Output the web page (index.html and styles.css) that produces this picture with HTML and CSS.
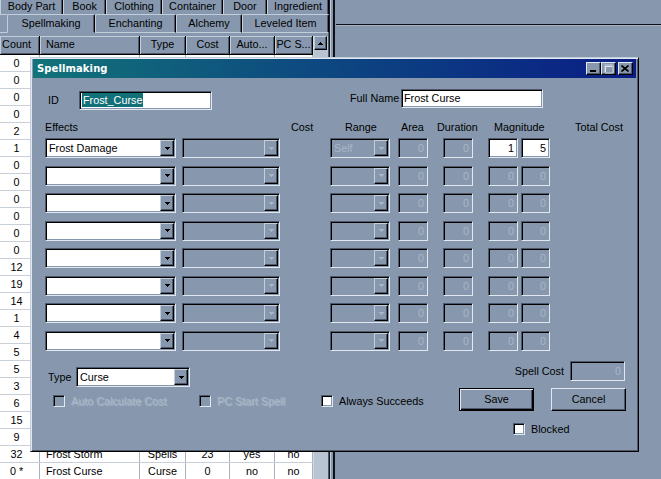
FILE: index.html
```html
<!DOCTYPE html>
<html>
<head>
<meta charset="utf-8">
<title>Spellmaking</title>
<link rel="stylesheet" href="styles.css">
</head>
<body>
<div class="screen">
  <div class="leftpane">
    <div class="tabs1">
      <div class="tab1 tw-body">Body Part</div>
      <div class="tab1 tw-book">Book</div>
      <div class="tab1 tw-cloth">Clothing</div>
      <div class="tab1 tw-cont">Container</div>
      <div class="tab1 tw-door">Door</div>
      <div class="tab1 tw-ingr">Ingredient</div>
    </div>
    <div class="tabs2">
      <div class="tab2 stub"></div>
      <div class="tab2 active tw-spell">Spellmaking</div>
      <div class="tab2 tw-ench">Enchanting</div>
      <div class="tab2 tw-alch">Alchemy</div>
      <div class="tab2 tw-lev">Leveled Item</div>
    </div>
    <div class="panel">
      <div class="list">
        <div class="lrow lhead">
          <div class="hc c-count">Count</div>
          <div class="hc c-name">Name</div>
          <div class="hc c-type">Type</div>
          <div class="hc c-cost">Cost</div>
          <div class="hc c-auto">Auto...</div>
          <div class="hc c-pc">PC S...</div>
        </div>
        <div class="lrow"><div class="dc c-count">0</div><div class="dc c-name"></div><div class="dc c-type"></div><div class="dc c-cost"></div><div class="dc c-auto"></div><div class="dc c-pc"></div></div>
        <div class="lrow"><div class="dc c-count">0</div><div class="dc c-name"></div><div class="dc c-type"></div><div class="dc c-cost"></div><div class="dc c-auto"></div><div class="dc c-pc"></div></div>
        <div class="lrow"><div class="dc c-count">0</div><div class="dc c-name"></div><div class="dc c-type"></div><div class="dc c-cost"></div><div class="dc c-auto"></div><div class="dc c-pc"></div></div>
        <div class="lrow"><div class="dc c-count">0</div><div class="dc c-name"></div><div class="dc c-type"></div><div class="dc c-cost"></div><div class="dc c-auto"></div><div class="dc c-pc"></div></div>
        <div class="lrow"><div class="dc c-count">2</div><div class="dc c-name"></div><div class="dc c-type"></div><div class="dc c-cost"></div><div class="dc c-auto"></div><div class="dc c-pc"></div></div>
        <div class="lrow"><div class="dc c-count">1</div><div class="dc c-name"></div><div class="dc c-type"></div><div class="dc c-cost"></div><div class="dc c-auto"></div><div class="dc c-pc"></div></div>
        <div class="lrow"><div class="dc c-count">0</div><div class="dc c-name"></div><div class="dc c-type"></div><div class="dc c-cost"></div><div class="dc c-auto"></div><div class="dc c-pc"></div></div>
        <div class="lrow"><div class="dc c-count">0</div><div class="dc c-name"></div><div class="dc c-type"></div><div class="dc c-cost"></div><div class="dc c-auto"></div><div class="dc c-pc"></div></div>
        <div class="lrow"><div class="dc c-count">0</div><div class="dc c-name"></div><div class="dc c-type"></div><div class="dc c-cost"></div><div class="dc c-auto"></div><div class="dc c-pc"></div></div>
        <div class="lrow"><div class="dc c-count">0</div><div class="dc c-name"></div><div class="dc c-type"></div><div class="dc c-cost"></div><div class="dc c-auto"></div><div class="dc c-pc"></div></div>
        <div class="lrow"><div class="dc c-count">0</div><div class="dc c-name"></div><div class="dc c-type"></div><div class="dc c-cost"></div><div class="dc c-auto"></div><div class="dc c-pc"></div></div>
        <div class="lrow"><div class="dc c-count">0</div><div class="dc c-name"></div><div class="dc c-type"></div><div class="dc c-cost"></div><div class="dc c-auto"></div><div class="dc c-pc"></div></div>
        <div class="lrow"><div class="dc c-count">12</div><div class="dc c-name"></div><div class="dc c-type"></div><div class="dc c-cost"></div><div class="dc c-auto"></div><div class="dc c-pc"></div></div>
        <div class="lrow"><div class="dc c-count">19</div><div class="dc c-name"></div><div class="dc c-type"></div><div class="dc c-cost"></div><div class="dc c-auto"></div><div class="dc c-pc"></div></div>
        <div class="lrow"><div class="dc c-count">14</div><div class="dc c-name"></div><div class="dc c-type"></div><div class="dc c-cost"></div><div class="dc c-auto"></div><div class="dc c-pc"></div></div>
        <div class="lrow"><div class="dc c-count">1</div><div class="dc c-name"></div><div class="dc c-type"></div><div class="dc c-cost"></div><div class="dc c-auto"></div><div class="dc c-pc"></div></div>
        <div class="lrow"><div class="dc c-count">4</div><div class="dc c-name"></div><div class="dc c-type"></div><div class="dc c-cost"></div><div class="dc c-auto"></div><div class="dc c-pc"></div></div>
        <div class="lrow"><div class="dc c-count">5</div><div class="dc c-name"></div><div class="dc c-type"></div><div class="dc c-cost"></div><div class="dc c-auto"></div><div class="dc c-pc"></div></div>
        <div class="lrow"><div class="dc c-count">5</div><div class="dc c-name"></div><div class="dc c-type"></div><div class="dc c-cost"></div><div class="dc c-auto"></div><div class="dc c-pc"></div></div>
        <div class="lrow"><div class="dc c-count">3</div><div class="dc c-name"></div><div class="dc c-type"></div><div class="dc c-cost"></div><div class="dc c-auto"></div><div class="dc c-pc"></div></div>
        <div class="lrow"><div class="dc c-count">6</div><div class="dc c-name"></div><div class="dc c-type"></div><div class="dc c-cost"></div><div class="dc c-auto"></div><div class="dc c-pc"></div></div>
        <div class="lrow"><div class="dc c-count">15</div><div class="dc c-name"></div><div class="dc c-type"></div><div class="dc c-cost"></div><div class="dc c-auto"></div><div class="dc c-pc"></div></div>
        <div class="lrow"><div class="dc c-count">9</div><div class="dc c-name"></div><div class="dc c-type"></div><div class="dc c-cost"></div><div class="dc c-auto"></div><div class="dc c-pc"></div></div>
        <div class="lrow"><div class="dc c-count">32</div><div class="dc c-name">Frost Storm</div><div class="dc c-type">Spells</div><div class="dc c-cost">23</div><div class="dc c-auto">yes</div><div class="dc c-pc">no</div></div>
        <div class="lrow"><div class="dc c-count">0 *</div><div class="dc c-name">Frost Curse</div><div class="dc c-type">Curse</div><div class="dc c-cost">0</div><div class="dc c-auto">no</div><div class="dc c-pc">no</div></div>
      </div>
      <div class="vscroll">
        <div class="sbtn"><svg width="5" height="3" viewBox="0 0 5 3"><path d="M2 0h1v1H2zM1 1h3v1H1zM0 2h5v1H0z"/></svg></div>
      </div>
    </div>
  </div>
  <div class="sep"></div>
  <div class="rightpane"><div class="rtop"></div></div>
</div>

<div class="dlg">
  <div class="titlebar">
    <span class="title">Spellmaking</span>
    <div class="tbtns">
      <span class="tbtn"><svg width="7" height="2" viewBox="0 0 7 2"><rect x="0" y="0" width="6" height="2" fill="#000"/></svg></span>
      <span class="tbtn tb-max"><svg width="10" height="10" viewBox="0 0 10 10"><path d="M1 1h8v8H1z M1.5 2.5h7v6h-7z" fill="none" stroke="#e0e7ef" stroke-width="1"/><path d="M0.5 0.5h8v8h-8z M0.5 1.5h8" fill="none" stroke="#a8b5c6" stroke-width="1"/></svg></span>
      <span class="tbtn tb-close"><svg width="8" height="7" viewBox="0 0 8 7"><path d="M0.5 0.5L7.5 6.5M7.5 0.5L0.5 6.5" stroke="#000" stroke-width="1.7"/></svg></span>
    </div>
  </div>
  <div class="dbody">
    <div class="toprow">
      <span class="lbl lbl-id">ID</span>
      <div class="edit white in-id"><span class="selected">Frost_Curse</span></div>
      <span class="lbl lbl-fn">Full Name</span>
      <div class="edit white in-fn">Frost Curse</div>
    </div>
    <div class="heads">
      <span class="h-eff">Effects</span>
      <span class="h-cost">Cost</span>
      <span class="h-range">Range</span>
      <span class="h-area">Area</span>
      <span class="h-dur">Duration</span>
      <span class="h-mag">Magnitude</span>
      <span class="h-total">Total Cost</span>
    </div>
    <div class="effects">
      <div class="erow">
        <div class="combo white cb-eff"><span class="ctext">Frost Damage</span><span class="cbtn"><svg width="5" height="3" viewBox="0 0 5 3"><path d="M0 0h5v1H0zM1 1h3v1H1zM2 2h1v1H2z"/></svg></span></div>
        <div class="combo dis cb-skill"><span class="ctext"></span><span class="cbtn"><svg width="5" height="3" viewBox="0 0 5 3"><path d="M0 0h5v1H0zM1 1h3v1H1zM2 2h1v1H2z"/></svg></span></div>
        <div class="combo dis cb-range"><span class="ctext">Self</span><span class="cbtn"><svg width="5" height="3" viewBox="0 0 5 3"><path d="M0 0h5v1H0zM1 1h3v1H1zM2 2h1v1H2z"/></svg></span></div>
        <div class="edit dis num e-area">0</div>
        <div class="edit dis num e-dur">0</div>
        <div class="edit white num e-m1">1</div>
        <div class="edit white num e-m2">5</div>
      </div>
      <div class="erow">
        <div class="combo white cb-eff"><span class="ctext"></span><span class="cbtn"><svg width="5" height="3" viewBox="0 0 5 3"><path d="M0 0h5v1H0zM1 1h3v1H1zM2 2h1v1H2z"/></svg></span></div>
        <div class="combo dis cb-skill"><span class="ctext"></span><span class="cbtn"><svg width="5" height="3" viewBox="0 0 5 3"><path d="M0 0h5v1H0zM1 1h3v1H1zM2 2h1v1H2z"/></svg></span></div>
        <div class="combo dis cb-range"><span class="ctext"></span><span class="cbtn"><svg width="5" height="3" viewBox="0 0 5 3"><path d="M0 0h5v1H0zM1 1h3v1H1zM2 2h1v1H2z"/></svg></span></div>
        <div class="edit dis num e-area">0</div>
        <div class="edit dis num e-dur">0</div>
        <div class="edit dis num e-m1">0</div>
        <div class="edit dis num e-m2">0</div>
      </div>
      <div class="erow">
        <div class="combo white cb-eff"><span class="ctext"></span><span class="cbtn"><svg width="5" height="3" viewBox="0 0 5 3"><path d="M0 0h5v1H0zM1 1h3v1H1zM2 2h1v1H2z"/></svg></span></div>
        <div class="combo dis cb-skill"><span class="ctext"></span><span class="cbtn"><svg width="5" height="3" viewBox="0 0 5 3"><path d="M0 0h5v1H0zM1 1h3v1H1zM2 2h1v1H2z"/></svg></span></div>
        <div class="combo dis cb-range"><span class="ctext"></span><span class="cbtn"><svg width="5" height="3" viewBox="0 0 5 3"><path d="M0 0h5v1H0zM1 1h3v1H1zM2 2h1v1H2z"/></svg></span></div>
        <div class="edit dis num e-area">0</div>
        <div class="edit dis num e-dur">0</div>
        <div class="edit dis num e-m1">0</div>
        <div class="edit dis num e-m2">0</div>
      </div>
      <div class="erow">
        <div class="combo white cb-eff"><span class="ctext"></span><span class="cbtn"><svg width="5" height="3" viewBox="0 0 5 3"><path d="M0 0h5v1H0zM1 1h3v1H1zM2 2h1v1H2z"/></svg></span></div>
        <div class="combo dis cb-skill"><span class="ctext"></span><span class="cbtn"><svg width="5" height="3" viewBox="0 0 5 3"><path d="M0 0h5v1H0zM1 1h3v1H1zM2 2h1v1H2z"/></svg></span></div>
        <div class="combo dis cb-range"><span class="ctext"></span><span class="cbtn"><svg width="5" height="3" viewBox="0 0 5 3"><path d="M0 0h5v1H0zM1 1h3v1H1zM2 2h1v1H2z"/></svg></span></div>
        <div class="edit dis num e-area">0</div>
        <div class="edit dis num e-dur">0</div>
        <div class="edit dis num e-m1">0</div>
        <div class="edit dis num e-m2">0</div>
      </div>
      <div class="erow">
        <div class="combo white cb-eff"><span class="ctext"></span><span class="cbtn"><svg width="5" height="3" viewBox="0 0 5 3"><path d="M0 0h5v1H0zM1 1h3v1H1zM2 2h1v1H2z"/></svg></span></div>
        <div class="combo dis cb-skill"><span class="ctext"></span><span class="cbtn"><svg width="5" height="3" viewBox="0 0 5 3"><path d="M0 0h5v1H0zM1 1h3v1H1zM2 2h1v1H2z"/></svg></span></div>
        <div class="combo dis cb-range"><span class="ctext"></span><span class="cbtn"><svg width="5" height="3" viewBox="0 0 5 3"><path d="M0 0h5v1H0zM1 1h3v1H1zM2 2h1v1H2z"/></svg></span></div>
        <div class="edit dis num e-area">0</div>
        <div class="edit dis num e-dur">0</div>
        <div class="edit dis num e-m1">0</div>
        <div class="edit dis num e-m2">0</div>
      </div>
      <div class="erow">
        <div class="combo white cb-eff"><span class="ctext"></span><span class="cbtn"><svg width="5" height="3" viewBox="0 0 5 3"><path d="M0 0h5v1H0zM1 1h3v1H1zM2 2h1v1H2z"/></svg></span></div>
        <div class="combo dis cb-skill"><span class="ctext"></span><span class="cbtn"><svg width="5" height="3" viewBox="0 0 5 3"><path d="M0 0h5v1H0zM1 1h3v1H1zM2 2h1v1H2z"/></svg></span></div>
        <div class="combo dis cb-range"><span class="ctext"></span><span class="cbtn"><svg width="5" height="3" viewBox="0 0 5 3"><path d="M0 0h5v1H0zM1 1h3v1H1zM2 2h1v1H2z"/></svg></span></div>
        <div class="edit dis num e-area">0</div>
        <div class="edit dis num e-dur">0</div>
        <div class="edit dis num e-m1">0</div>
        <div class="edit dis num e-m2">0</div>
      </div>
      <div class="erow">
        <div class="combo white cb-eff"><span class="ctext"></span><span class="cbtn"><svg width="5" height="3" viewBox="0 0 5 3"><path d="M0 0h5v1H0zM1 1h3v1H1zM2 2h1v1H2z"/></svg></span></div>
        <div class="combo dis cb-skill"><span class="ctext"></span><span class="cbtn"><svg width="5" height="3" viewBox="0 0 5 3"><path d="M0 0h5v1H0zM1 1h3v1H1zM2 2h1v1H2z"/></svg></span></div>
        <div class="combo dis cb-range"><span class="ctext"></span><span class="cbtn"><svg width="5" height="3" viewBox="0 0 5 3"><path d="M0 0h5v1H0zM1 1h3v1H1zM2 2h1v1H2z"/></svg></span></div>
        <div class="edit dis num e-area">0</div>
        <div class="edit dis num e-dur">0</div>
        <div class="edit dis num e-m1">0</div>
        <div class="edit dis num e-m2">0</div>
      </div>
      <div class="erow">
        <div class="combo white cb-eff"><span class="ctext"></span><span class="cbtn"><svg width="5" height="3" viewBox="0 0 5 3"><path d="M0 0h5v1H0zM1 1h3v1H1zM2 2h1v1H2z"/></svg></span></div>
        <div class="combo dis cb-skill"><span class="ctext"></span><span class="cbtn"><svg width="5" height="3" viewBox="0 0 5 3"><path d="M0 0h5v1H0zM1 1h3v1H1zM2 2h1v1H2z"/></svg></span></div>
        <div class="combo dis cb-range"><span class="ctext"></span><span class="cbtn"><svg width="5" height="3" viewBox="0 0 5 3"><path d="M0 0h5v1H0zM1 1h3v1H1zM2 2h1v1H2z"/></svg></span></div>
        <div class="edit dis num e-area">0</div>
        <div class="edit dis num e-dur">0</div>
        <div class="edit dis num e-m1">0</div>
        <div class="edit dis num e-m2">0</div>
      </div>
    </div>
    <div class="bottom">
      <div class="bleft">
        <div class="typerow">
          <span class="lbl lbl-type">Type</span>
          <div class="combo white cb-type"><span class="ctext">Curse</span><span class="cbtn"><svg width="5" height="3" viewBox="0 0 5 3"><path d="M0 0h5v1H0zM1 1h3v1H1zM2 2h1v1H2z"/></svg></span></div>
        </div>
        <div class="cbrow">
          <div class="cbi cbi-auto"><span class="check dis"></span><span class="distext">Auto Calculate Cost</span></div>
          <div class="cbi cbi-pc"><span class="check dis"></span><span class="distext">PC Start Spell</span></div>
          <div class="cbi"><span class="check"></span><span>Always Succeeds</span></div>
        </div>
      </div>
      <div class="bright">
        <div class="scrow">
          <span class="lbl lbl-sc">Spell Cost</span>
          <div class="edit dis num in-sc">0</div>
        </div>
        <div class="btnrow">
          <div class="pbtn default">Save</div>
          <div class="pbtn">Cancel</div>
        </div>
        <div class="blkrow">
          <span class="check"></span><span>Blocked</span>
        </div>
      </div>
    </div>
  </div>
</div>
</body>
</html>
```

FILE: styles.css
```css
:root {
  --face: #8798ae;
  --lt: #c3cedb;
  --hl: #e1e8f0;
  --sh: #4d596b;
  --dk: #000;
  --dis: #a9b6c7;
}
* { box-sizing: border-box; }
html, body { margin: 0; padding: 0; }
body {
  width: 661px;
  height: 479px;
  overflow: hidden;
  background: var(--face);
  font-family: "Liberation Sans", Arial, sans-serif;
  font-size: 10.8px;
  color: #000;
  position: relative;
}

/* ---------- background window ---------- */
.screen { display: flex; height: 479px; }
.leftpane { width: 329px; display: flex; flex-direction: column; }

.tabs1, .tabs2 { display: flex; }
.tab1 {
  height: 14px;
  line-height: 13px;
  text-align: center;
  border-left: 1px solid var(--lt);
  border-right: 1px solid var(--dk);
  box-shadow: inset -1px 0 0 var(--sh);
  white-space: nowrap;
}
.tw-body { width: 63px; }
.tw-book { width: 43px; }
.tw-cloth { width: 56px; }
.tw-cont { width: 61px; }
.tw-door { width: 44px; }
.tw-ingr { width: 62px; }

.tab2 {
  height: 19px;
  line-height: 17px;
  text-align: center;
  border-top: 1px solid var(--lt);
  border-left: 1px solid var(--lt);
  border-right: 1px solid var(--dk);
  border-bottom: 1px solid var(--lt);
  box-shadow: inset -1px 0 0 var(--sh);
  border-radius: 2px 2px 0 0;
  white-space: nowrap;
}
.tab2.stub { width: 7px; border-left: 0; border-right: 0; box-shadow: none; border-radius: 0; }
.tab2.active { border-bottom-color: var(--face); }
.tw-spell { width: 88px; }
.tw-ench { width: 81px; }
.tw-alch { width: 66px; }
.tw-lev { width: 87px; }

.panel { display: flex; padding-top: 3px; flex: 1; border-right: 1px solid var(--sh); }
.list { width: 313px; background: #fff; }
.lrow {
  display: grid;
  grid-template-columns: 40px 100px 46px 44px 45px 38px;
  height: 17px;
  border-bottom: 1px solid #c9cfd8;
}
.lrow.lhead { height: 19px; border-bottom: 0; background: var(--face); }
.hc {
  line-height: 17px;
  text-align: center;
  border-right: 1px solid var(--dk);
  border-bottom: 1px solid var(--dk);
  box-shadow: inset 1px 1px 0 var(--lt), inset -1px -1px 0 var(--sh);
  white-space: nowrap;
  overflow: hidden;
}
.hc.c-count { padding-right: 6px; }
.hc.c-name { text-align: left; padding-left: 6px; }
.dc {
  line-height: 16px;
  text-align: center;
  border-right: 1px solid #aab2be;
  white-space: nowrap;
  overflow: hidden;
}
.dc.c-count { padding-right: 6px; }
.dc.c-name { text-align: left; padding-left: 6px; }

.vscroll { width: 15px; background: #b9c4d2; border-left: 1px solid #d0d8e2; }
.sbtn {
  width: 13px;
  height: 14px;
  background: var(--face);
  border: 1px solid;
  border-color: var(--lt) var(--dk) var(--dk) var(--lt);
  box-shadow: inset -1px -1px 0 var(--sh);
  display: flex;
  align-items: center;
  justify-content: center;
}

.sep {
  width: 7px;
  border-left: 1px solid #15191f;
  box-shadow: inset 1px 0 0 var(--lt);
}
.sep::after {
  content: "";
  display: block;
  margin-left: 3px;
  width: 2px;
  height: 100%;
  background: #0d1016;
}
.rightpane { flex: 1; }
.rtop { height: 25px; border-bottom: 1px solid #0d1016; box-shadow: 0 1px 0 #a3b0c0; }

/* ---------- dialog window ---------- */
.dlg {
  position: absolute;
  left: 30px;
  top: 57px;
  width: 609px;
  height: 395px;
  background: var(--face);
  border: 1px solid;
  border-color: var(--lt) var(--dk) var(--dk) var(--lt);
  box-shadow: inset 1px 1px 0 var(--hl), inset -1px -1px 0 var(--sh);
  padding: 1px 2px 2px 2px;
}
.titlebar {
  height: 19px;
  background: linear-gradient(to right, #127379 0%, #0d4a80 45%, #0a1d86 100%);
  display: flex;
  align-items: center;
  justify-content: space-between;
  padding: 0 3px 0 4px;
}
.title {
  font-family: "DejaVu Sans", Verdana, sans-serif;
  font-weight: bold;
  font-size: 10px;
  color: #fff;
  letter-spacing: 0.1px;
}
.tbtns { display: flex; }
.tbtn {
  width: 15px;
  height: 13px;
  background: var(--face);
  border: 1px solid;
  border-color: var(--hl) var(--dk) var(--dk) var(--hl);
  box-shadow: inset -1px -1px 0 var(--sh);
  display: flex;
  align-items: flex-end;
  justify-content: flex-start;
  padding: 0 0 2px 3px;
}
.tbtn.tb-max { align-items: center; justify-content: center; padding: 0; }
.tbtn.tb-close { margin-left: 2px; align-items: center; justify-content: center; padding: 0 1px 1px 0; }

.dbody { display: flex; flex-direction: column; }
.lbl { line-height: 14px; white-space: nowrap; }

.edit, .combo {
  height: 20px;
  border: 1px solid;
  border-color: var(--sh) var(--hl) var(--hl) var(--sh);
  box-shadow: inset 1px 1px 0 var(--dk), inset -1px -1px 0 var(--face);
  padding: 1px;
  line-height: 16px;
  white-space: nowrap;
  overflow: hidden;
}
.edit { padding: 1px 3px 1px 2px; }
.white { background: #fff; }
.dis { background: var(--face); color: var(--dis); }
.num { text-align: right; }
.selected { background: #127078; color: #fff; display: inline-block; line-height: 14px; padding: 0 1px; }

.toprow { display: flex; align-items: flex-start; margin-top: 11px; padding-left: 15px; height: 21px; }
.lbl-id { width: 31px; margin-top: 4px; }
.in-id { width: 133px; height: 19px; margin-top: 2px; line-height: 15px; }
.lbl-fn { margin-left: 138px; width: 51px; margin-top: 2px; }
.in-fn { width: 142px; height: 19px; line-height: 15px; }

.heads { display: flex; margin-top: 10px; padding-left: 12px; height: 14px; line-height: 14px; white-space: nowrap; }
.h-eff { width: 246px; }
.h-cost { width: 54px; }
.h-range { width: 56px; }
.h-area { width: 36px; }
.h-dur { width: 57px; }
.h-mag { width: 81px; }

.effects { display: flex; flex-direction: column; gap: 7.5px; margin-top: 4px; padding-left: 12px; }
.erow { display: flex; height: 20px; }
.combo { display: flex; }
.ctext { flex: 1; padding-left: 2px; overflow: hidden; }
.dis .ctext { color: var(--dis); }
.cbtn {
  width: 14px;
  background: var(--face);
  border: 1px solid;
  border-color: var(--lt) var(--dk) var(--dk) var(--lt);
  box-shadow: inset -1px -1px 0 var(--sh);
  display: flex;
  align-items: center;
  justify-content: center;
  fill: #000;
}
.dis .cbtn { fill: var(--dis); }
.cb-eff { width: 131px; }
.cb-skill { width: 98px; margin-left: 6px; }
.cb-range { width: 60px; margin-left: 50px; }
.e-area { width: 30px; margin-left: 8px; }
.e-dur { width: 30px; margin-left: 15px; }
.e-m1 { width: 30px; margin-left: 15px; }
.e-m2 { width: 29px; margin-left: 3px; }

.bottom { display: flex; margin-top: 10.5px; }
.bleft { width: 426px; padding-left: 15px; }
.typerow { display: flex; align-items: center; margin-top: 6px; height: 20px; }
.lbl-type { width: 28px; }
.cb-type { width: 114px; }
.cbrow { display: flex; align-items: center; margin-top: 7px; height: 14px; }
.cbi { display: flex; align-items: center; gap: 6px; white-space: nowrap; }
.cbi-auto { margin-left: 5px; width: 146px; }
.cbi-pc { width: 122px; }
.check {
  width: 12px;
  height: 12px;
  flex: none;
  background: #fff;
  border: 1px solid;
  border-color: var(--sh) var(--hl) var(--hl) var(--sh);
  box-shadow: inset 1px 1px 0 var(--dk), inset -1px -1px 0 var(--face);
}
.check.dis { background: var(--face); }
.distext { color: var(--dis); text-shadow: 1px 1px 0 rgba(225, 232, 240, 0.35); }

.bright { width: 167px; }
.scrow { display: flex; justify-content: flex-end; align-items: center; height: 20px; }
.lbl-sc { margin-right: 6px; }
.in-sc { width: 55px; margin-right: 1px; }
.btnrow { display: flex; gap: 17px; margin-top: 7px; }
.pbtn {
  width: 75px;
  height: 23px;
  line-height: 20px;
  text-align: center;
  background: var(--face);
  border: 1px solid;
  border-color: var(--hl) var(--dk) var(--dk) var(--hl);
  box-shadow: inset -1px -1px 0 var(--sh);
}
.pbtn.default {
  border-color: var(--dk);
  box-shadow: inset 1px 1px 0 var(--hl), inset -1px -1px 0 var(--dk), inset -2px -2px 0 var(--sh);
}
.blkrow { display: flex; align-items: center; gap: 6px; margin-top: 11px; height: 13px; padding-left: 54px; }
```
